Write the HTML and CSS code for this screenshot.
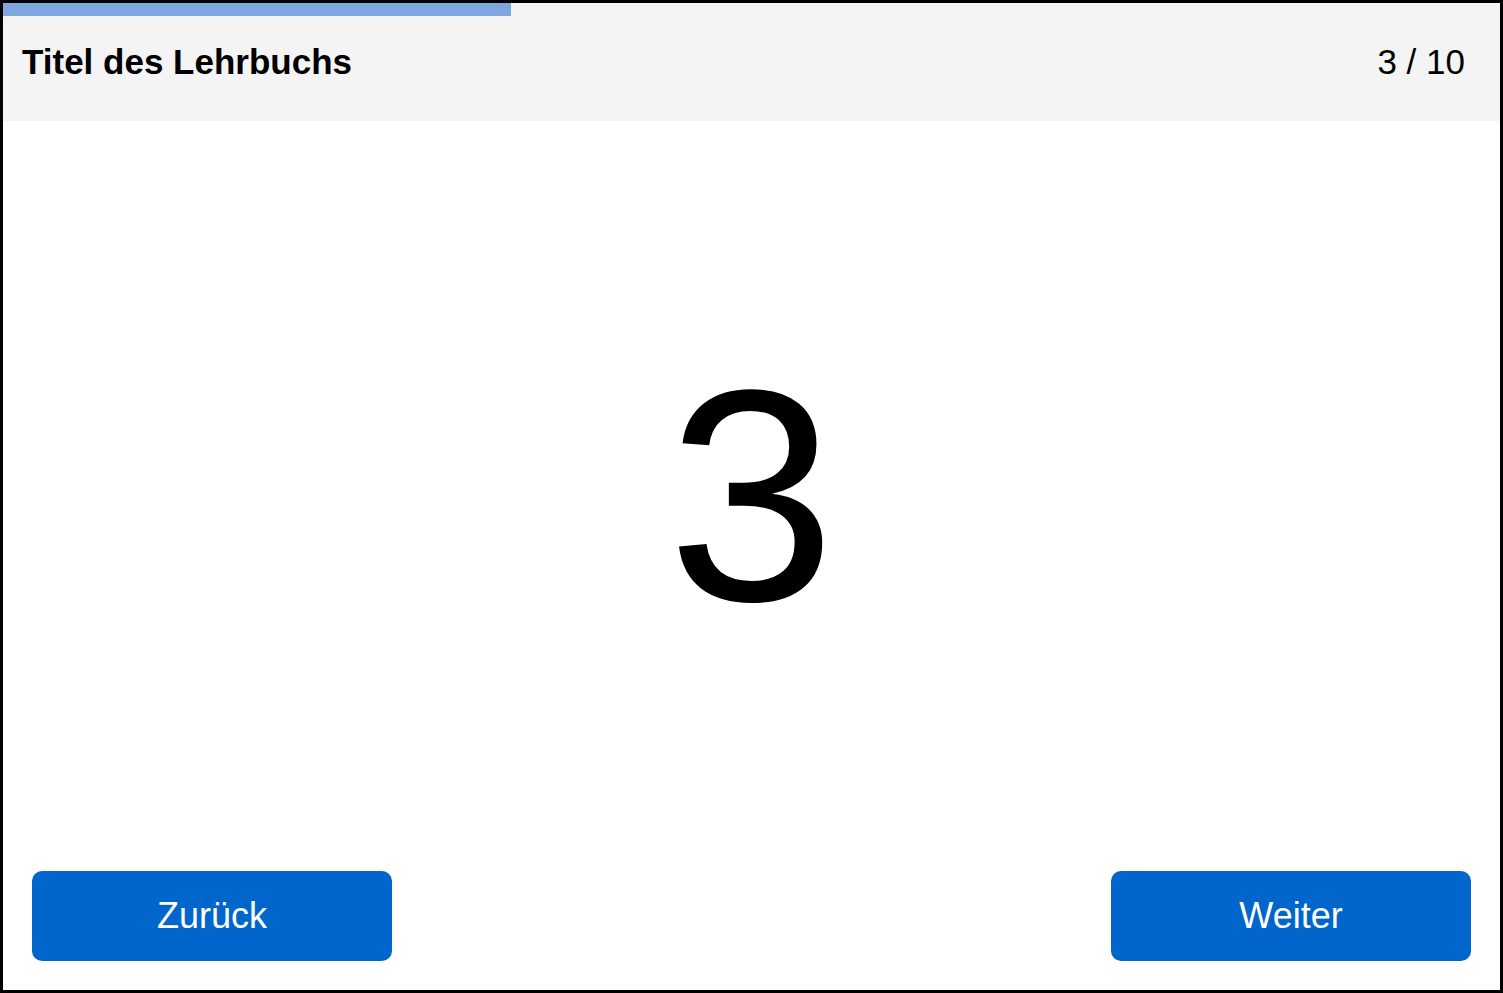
FILE: index.html
```html
<!DOCTYPE html>
<html lang="de">
<head>
<meta charset="utf-8">
<title>Titel des Lehrbuchs</title>
<link rel="stylesheet" href="styles.css">
</head>
<body>
<div class="app">
  <header class="header">
    <div class="progress"><div class="progress-fill"></div></div>
    <div class="header-row">
      <h1 class="title">Titel des Lehrbuchs</h1>
      <span class="counter">3 / 10</span>
    </div>
  </header>
  <main class="page">
    <div class="page-number">3</div>
  </main>
  <footer class="nav">
    <button class="btn">Zurück</button>
    <button class="btn">Weiter</button>
  </footer>
</div>
</body>
</html>
```
FILE: styles.css
```css
html, body {
  margin: 0;
  padding: 0;
  height: 100%;
}
body {
  font-family: "Liberation Sans", Arial, sans-serif;
  color: #000;
  background: #fff;
}
.app {
  box-sizing: border-box;
  height: 993px;
  border: 3px solid #000;
  display: flex;
  flex-direction: column;
}
.header {
  background: #f4f4f4;
  height: 118px;
  display: flex;
  flex-direction: column;
}
.progress {
  height: 13px;
}
.progress-fill {
  width: 508px;
  height: 100%;
  background: #7ea7e0;
}
.header-row {
  flex: 1;
  display: flex;
  align-items: center;
  justify-content: space-between;
  padding: 0 35px 14px 19px;
}
.title {
  margin: 0;
  font-size: 35px;
  font-weight: bold;
}
.counter {
  font-size: 35px;
}
.page {
  flex: 1;
  display: flex;
  align-items: center;
  justify-content: center;
}
.page-number {
  font-size: 302px;
  line-height: 1;
}
.nav {
  display: flex;
  justify-content: space-between;
  padding: 0 29px 29px 29px;
}
.btn {
  width: 360px;
  height: 90px;
  border: none;
  border-radius: 10px;
  background: #0066cc;
  color: #fff;
  font-family: "Liberation Sans", Arial, sans-serif;
  font-size: 36px;
  padding: 0;
}
```
